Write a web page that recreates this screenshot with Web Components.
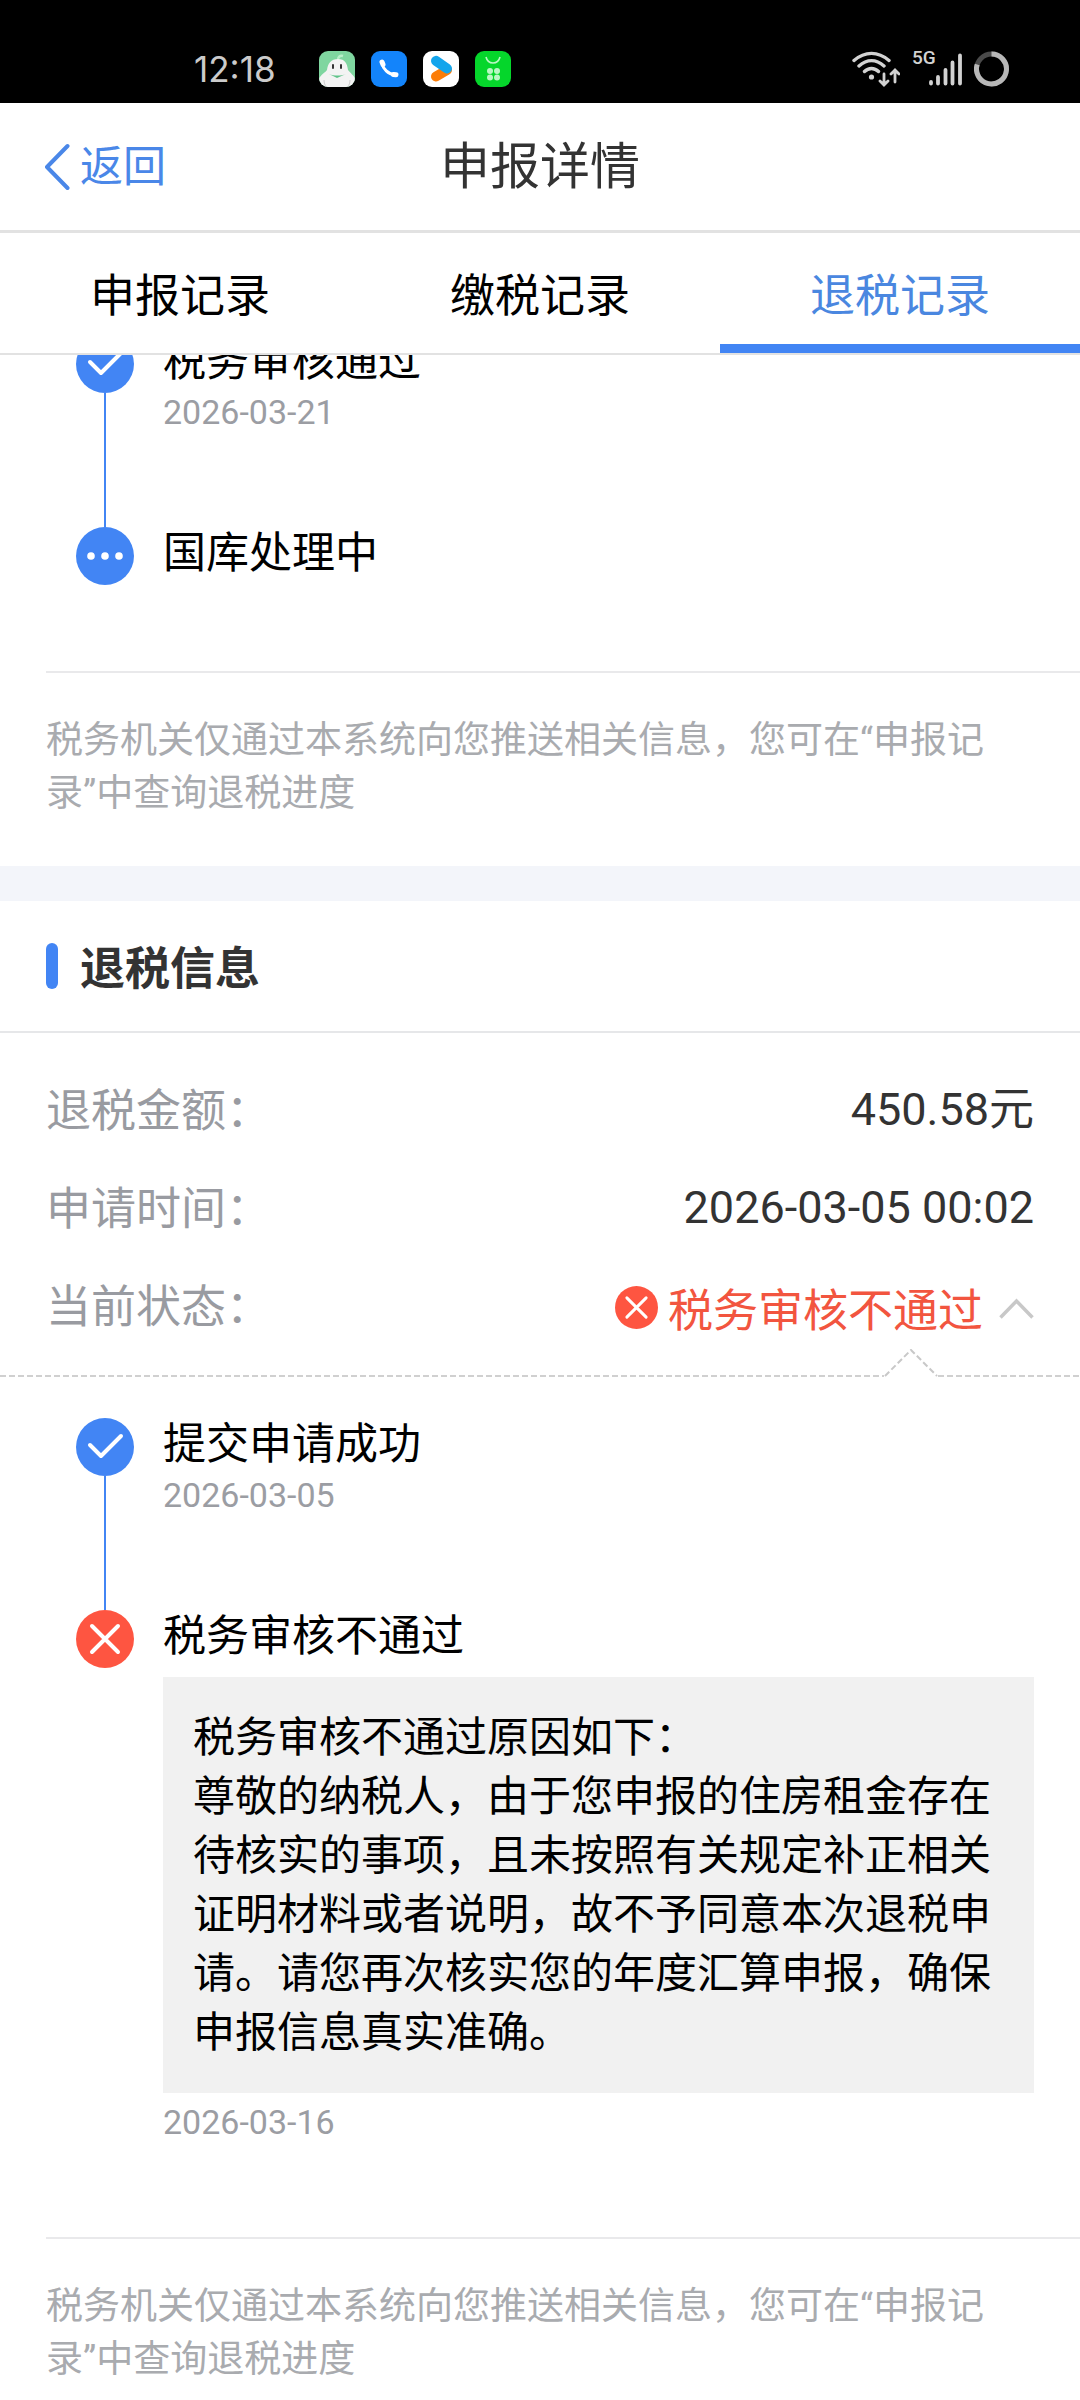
<!DOCTYPE html>
<html lang="zh-CN">
<head>
<meta charset="utf-8">
<meta name="viewport" content="width=device-width, initial-scale=1">
<title>申报详情</title>
<style>
  body {
    margin: 0;
    background: #fff;
    color: #000;
    font-family: Roboto, "Noto Sans CJK SC", sans-serif;
  }

  header {
    position: sticky;
    top: 0;
    z-index: 1;
    background: #fff;
  }

  /* the first timeline is partly scrolled under the header */
  .scrolled {
    margin-top: -20px;
  }

  .band {
    height: 35px;
    background: #f3f5fa;
  }

  .rows {
    margin: 0;
    padding-top: 28px;
  }

  .opened {
    padding-top: 41px;
  }
</style>
</head>
<body>
<header>
  <status-bar></status-bar>
  <nav-bar back="返回">申报详情</nav-bar>
  <record-tabs>
    <record-tab>申报记录</record-tab>
    <record-tab>缴税记录</record-tab>
    <record-tab active>退税记录</record-tab>
  </record-tabs>
</header>

<main>
  <section class="scrolled">
    <timeline-step state="done" date="2026-03-21">税务审核通过</timeline-step>
    <timeline-step state="pending" last>国库处理中</timeline-step>
    <tax-notice>税务机关仅通过本系统向您推送相关信息，您可在“申报记录”中查询退税进度</tax-notice>
  </section>

  <div class="band"></div>

  <section>
    <section-title>退税信息</section-title>
    <div class="rows">
      <info-row label="退税金额：">450.58元</info-row>
      <info-row label="申请时间：">2026-03-05 00:02</info-row>
      <info-row label="当前状态："><status-toggle>税务审核不通过</status-toggle></info-row>
    </div>
    <callout-line></callout-line>
    <div class="opened">
      <timeline-step state="done" date="2026-03-05">提交申请成功</timeline-step>
      <timeline-step state="failed" date="2026-03-16" last>
        税务审核不通过
        <reason-box slot="detail">税务审核不通过原因如下：<br>尊敬的纳税人，由于您申报的住房租金存在待核实的事项，且未按照有关规定补正相关证明材料或者说明，故不予同意本次退税申请。请您再次核实您的年度汇算申报，确保申报信息真实准确。</reason-box>
      </timeline-step>
      <tax-notice end>税务机关仅通过本系统向您推送相关信息，您可在“申报记录”中查询退税进度</tax-notice>
    </div>
  </section>
</main>

<script>
const define = function (name, render) {
  customElements.define(name, class extends HTMLElement {
    constructor() {
      super();
      const template = document.createElement('template');
      template.innerHTML = render(this);
      this.attachShadow({mode: 'open'}).appendChild(template.content.cloneNode(true));
    }
  });
};

const CJK = '"Noto Sans CJK SC", sans-serif';

const CROSS = '<path d="M16 16 42 42M42 16 16 42" fill="none" stroke="#fff" stroke-width="4" stroke-linecap="round"/>';

const MARKERS = {
  done: '<circle cx="29" cy="29" r="29" fill="#4285f4"/><path d="M14 27 25 38 45 18" fill="none" stroke="#fff" stroke-width="4" stroke-linecap="round" stroke-linejoin="round"/>',
  pending: '<circle cx="29" cy="29" r="29" fill="#4285f4"/><g fill="#fff"><circle cx="15" cy="29" r="3.8"/><circle cx="29" cy="29" r="3.8"/><circle cx="43" cy="29" r="3.8"/></g>',
  failed: '<circle cx="29" cy="29" r="29" fill="#fe5541"/>' + CROSS
};

define('status-bar', () => `
  <style>
    :host {
      display: flex;
      align-items: center;
      justify-content: space-between;
      height: 69px;
      padding: 34px 71px 0 194px;
      background: #000;
      color: #cbcbcb;
    }
    div { display: flex; align-items: center; }
    .apps { gap: 16px; }
    .signals { gap: 12px; }
    time {
      width: 125px;
      font: 35px/36px Inter, Roboto, sans-serif;
    }
    svg { display: block; }
  </style>
  <div>
    <time>12:18</time>
    <div class="apps">
      <svg width="36" height="36" viewBox="0 0 36 36">
        <defs><clipPath id="c"><rect width="36" height="36" rx="9"/></clipPath></defs>
        <g clip-path="url(#c)">
          <rect width="36" height="36" fill="#7fd6a0"/>
          <path d="M19 9c0-3 2-5 5-4" fill="none" stroke="#b8efc9" stroke-width="2.4"/>
          <path d="M0 36V28c2-5 6-6 8-9 1-7 4-11 11-11s9 4 10 11c2 3 6 5 7 9v8z" fill="#f3f3f3"/>
          <path d="M10 23c5 2 12 2 17 0l-9 4z" fill="#5fc389"/>
          <path d="M14 14v3M22 14v3" stroke="#333" stroke-width="2" stroke-linecap="round"/>
          <path d="M5 29c0 3 1 5 2 7M31 29c0 3-1 5-2 7" stroke="#ccc" stroke-width="1" fill="none"/>
        </g>
      </svg>
      <svg width="36" height="36" viewBox="0 0 36 36">
        <rect width="36" height="36" rx="9" fill="#1384fb"/>
        <path d="M11 12c1 6 6 11 13 12" fill="none" stroke="#fff" stroke-width="3"/>
        <path d="M11 11l1 2.500M22.500 23.500l2.500.3" stroke="#fff" stroke-width="5" stroke-linecap="round"/>
      </svg>
      <svg width="36" height="36" viewBox="0 0 36 36">
        <rect width="36" height="36" rx="9" fill="#fff"/>
        <path d="M13 25.500 24 19" stroke="#fc7d08" stroke-width="10" stroke-linecap="round"/>
        <path d="M13 9.800 24 17.500" stroke="#14a5ec" stroke-width="10" stroke-linecap="round"/>
      </svg>
      <svg width="36" height="36" viewBox="0 0 36 36">
        <rect width="36" height="36" rx="9" fill="#05d62b"/>
        <path d="M11 6c2 8 12 8 14 0" fill="none" stroke="#b9f7c4" stroke-width="1.600"/>
        <g fill="#b9f7c4">
          <circle cx="15" cy="20" r="3"/><circle cx="22" cy="20" r="3"/>
          <circle cx="15" cy="26.500" r="3"/><circle cx="22" cy="26.500" r="3"/>
        </g>
      </svg>
    </div>
  </div>
  <div class="signals">
    <svg width="48" height="36" viewBox="0 0 48 36" fill="none" stroke="#d2d2d2" stroke-width="3.400" stroke-linecap="round">
      <path d="M2 9.500C13 0 26 0 37 9.500M7 15C15 8 24 8 32 15M12.500 20.500c4-4 10-4 14 0"/>
      <circle cx="19.500" cy="26" r="2.600" fill="#d2d2d2" stroke="none"/>
      <path d="M32 23v10M28 30l4 4 4-4M43 31V20M39 23l4-4 4 4" stroke-width="2.800"/>
    </svg>
    <svg width="50" height="48" viewBox="0 -6 50 48">
      <text x="0" y="13" font-family="Roboto, sans-serif" font-size="19" font-weight="500" fill="#d2d2d2">5G</text>
      <path d="M19 31v1.500M26 26v6.500M33.500 19v13.500M40.500 11.500v21M48 4.500v28" stroke="#d2d2d2" stroke-width="3.800" stroke-linecap="round"/>
    </svg>
    <svg width="35" height="36" viewBox="0 0 35 36" fill="none" stroke-width="5">
      <circle cx="17.500" cy="18" r="15" stroke="#4a4a4a"/>
      <path d="M17.500 3A15 15 0 1 1 3.200 13.400" stroke="#b8b8b8"/>
    </svg>
  </div>
`);

define('nav-bar', (el) => `
  <style>
    :host {
      display: grid;
      grid-template-columns: 1fr auto 1fr;
      align-items: center;
      height: 127px;
      padding: 0 44px;
      border-bottom: 3px solid #e2e2e2;
    }
    a {
      display: flex;
      align-items: center;
      gap: 10px;
      color: #4a87e8;
      font-size: 43px;
      line-height: 60px;
      text-decoration: none;
    }
    h1 {
      margin: 0;
      color: #333;
      font-size: 50px;
      font-weight: 400;
      line-height: 60px;
    }
  </style>
  <a href="#">
    <svg width="26" height="48" viewBox="0 0 26 48"><path d="M23.500 3 3 24 23.500 45" fill="none" stroke="#4a87e8" stroke-width="4" stroke-linecap="round" stroke-linejoin="round"/></svg>
    <span>${el.getAttribute('back')}</span>
  </a>
  <h1><slot></slot></h1>
`);

define('record-tabs', () => `
  <style>
    :host {
      display: grid;
      grid-template-columns: repeat(3, 1fr);
      height: 120px;
      border-bottom: 2px solid #e2e2e2;
    }
  </style>
  <slot></slot>
`);

define('record-tab', () => `
  <style>
    :host { display: flex; }
    button {
      flex: 1;
      padding: 9px 0 0;
      border: 0;
      border-bottom: 9px solid transparent;
      background: none;
      color: #000;
      font: 45px/60px ${CJK};
    }
    :host([active]) button {
      border-color: #4285f4;
      color: #4a87e0;
    }
  </style>
  <button type="button"><slot></slot></button>
`);

define('timeline-step', (el) => `
  <style>
    :host {
      display: grid;
      grid-template-columns: 58px 1fr;
      column-gap: 29px;
      min-height: 192px;
      padding: 0 46px 0 76px;
    }
    :host([last]) {
      min-height: 0;
      padding-bottom: 86px;
    }
    .marker {
      display: flex;
      flex-direction: column;
      align-items: center;
    }
    .marker::after {
      content: "";
      flex: 1;
      width: 2px;
      background: #4285f4;
    }
    :host([last]) .marker::after { display: none; }
    svg { display: block; }
    .title {
      font-size: 43px;
      line-height: 52px;
    }
    time {
      display: block;
      color: #9b9da3;
      font-size: 34px;
      line-height: 50px;
    }
  </style>
  <div class="marker">
    <svg width="58" height="58" viewBox="0 0 58 58">${MARKERS[el.getAttribute('state')]}</svg>
  </div>
  <div>
    <div class="title"><slot></slot></div>
    <slot name="detail"></slot>
    ${el.hasAttribute('date') ? `<time>${el.getAttribute('date')}</time>` : ''}
  </div>
`);

define('reason-box', () => `
  <style>
    :host {
      display: block;
      margin: 15px 0 4px;
      padding: 31px 30px;
      background: #f1f1f1;
      font-size: 42px;
      line-height: 59px;
    }
  </style>
  <slot></slot>
`);

define('tax-notice', () => `
  <style>
    :host {
      display: block;
      margin-left: 46px;
      padding: 41px 60px 46px 0;
      border-top: 2px solid #e9e9eb;
      color: #a9abaf;
      font-size: 37px;
      line-height: 53px;
    }
    :host([end]) {
      margin-top: 4px;
      padding-bottom: 12px;
    }
    p { margin: 0; }
  </style>
  <p><slot></slot></p>
`);

define('section-title', () => `
  <style>
    :host {
      display: flex;
      align-items: center;
      gap: 22px;
      height: 130px;
      padding: 0 46px;
      border-bottom: 2px solid #e6e7e9;
    }
    :host::before {
      content: "";
      width: 12px;
      height: 46px;
      border-radius: 6px;
      background: #4285f4;
    }
    h2 {
      margin: 0;
      color: #333;
      font: 700 45px/60px ${CJK};
    }
  </style>
  <h2><slot></slot></h2>
`);

define('info-row', (el) => `
  <style>
    :host {
      display: flex;
      align-items: center;
      justify-content: space-between;
      height: 98px;
      padding: 0 46px;
      font-size: 45px;
      line-height: 60px;
    }
    .label {
      padding-top: 3px;
      color: #999ba1;
    }
    .value { color: #333; }
  </style>
  <span class="label">${el.getAttribute('label')}</span>
  <span class="value"><slot></slot></span>
`);

define('status-toggle', () => `
  <style>
    :host { display: block; }
    button {
      display: flex;
      align-items: center;
      gap: 10px;
      padding: 3px 0 0;
      border: 0;
      background: none;
      color: #f2553f;
      font: 45px/60px ${CJK};
    }
    svg { display: block; }
    .arrow { margin-left: 6px; }
  </style>
  <button type="button" aria-expanded="true">
    <svg width="43" height="43" viewBox="0 0 58 58">${MARKERS.failed}</svg>
    <span><slot></slot></span>
    <svg class="arrow" width="35" height="22" viewBox="0 0 35 22"><path d="M1.500 20.500 17.500 4l16 16.500" fill="none" stroke="#c8c8c8" stroke-width="3.500"/></svg>
  </button>
`);

define('callout-line', () => `
  <style>
    :host {
      display: flex;
      align-items: flex-end;
      margin-top: -6px;
    }
    i {
      flex: 1;
      height: 2px;
      background: repeating-linear-gradient(90deg, #d0d0d0 0 6px, transparent 6px 9px);
    }
    i:last-child { flex: 0 0 142px; }
    svg { display: block; }
  </style>
  <i></i>
  <svg width="54" height="28" viewBox="0 0 54 28"><path d="M1 27 27 1 53 27" fill="none" stroke="#c8c8c8" stroke-width="2" stroke-dasharray="6 3"/></svg>
  <i></i>
`);
</script>
</body>
</html>
